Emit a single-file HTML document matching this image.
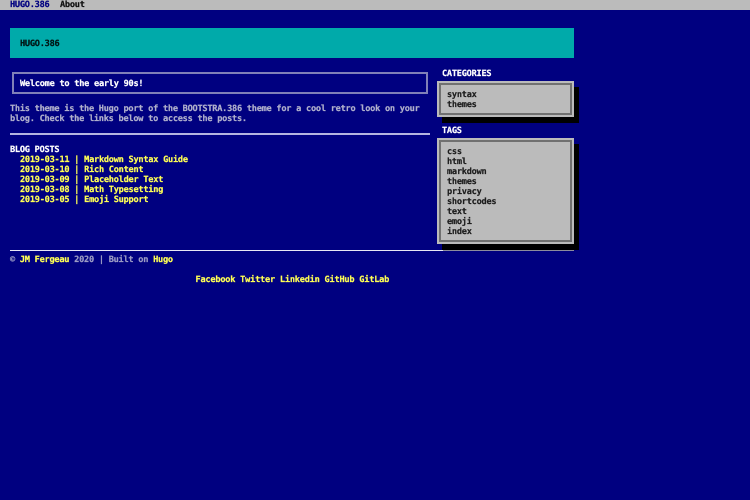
<!DOCTYPE html>
<html>
<head>
<meta charset="utf-8">
<style>
html,body{margin:0;padding:0;background:#000080;width:750px;height:500px;overflow:hidden}
body{position:relative;font-family:"DejaVu Sans Mono","Liberation Mono",monospace;font-size:8.6px;letter-spacing:-.24px;line-height:10px;font-weight:bold;color:#bbb;-webkit-text-stroke:.2px currentColor;text-rendering:geometricPrecision}
div{position:absolute;box-sizing:border-box}
.t{white-space:pre;height:10px;margin-top:2px}
.y{color:#ffff54}
.w{color:#fff}
.g{color:#b0b0cc}
.f{color:#9c9cc4}
.d{color:#1c1c1c}
.panel{background:#bbb;left:437px;width:137px;box-shadow:5px 6px 0 #000}
.panel:after{content:"";position:absolute;left:2px;top:2px;right:2px;bottom:2px;border:2px solid #707070}
</style>
</head>
<body>
<div style="left:0;top:0;width:750px;height:10px;background:#bbb"></div>
<div class="t" style="left:10px;top:-2px;color:#000080">HUGO.386</div>
<div class="t" style="left:60px;top:-2px;color:#111">About</div>

<div style="left:10px;top:28px;width:564px;height:30px;background:#00aaaa"></div>
<div class="t" style="left:20px;top:37px;color:#001414">HUGO.386</div>

<div style="left:12px;top:72px;width:416px;height:22px;border:2px solid #8080b8"></div>
<div class="t w" style="left:20px;top:77px">Welcome to the early 90s!</div>

<div class="t g" style="left:10px;top:102px">This theme is the Hugo port of the BOOTSTRA.386 theme for a cool retro look on your</div>
<div class="t g" style="left:10px;top:112px">blog. Check the links below to access the posts.</div>

<div style="left:10px;top:133px;width:420px;height:2px;background:#b4b4e0"></div>

<div class="t w" style="left:10px;top:143px">BLOG POSTS</div>
<div class="t y" style="left:20px;top:153px">2019-03-11 | Markdown Syntax Guide</div>
<div class="t y" style="left:20px;top:163px">2019-03-10 | Rich Content</div>
<div class="t y" style="left:20px;top:173px">2019-03-09 | Placeholder Text</div>
<div class="t y" style="left:20px;top:183px">2019-03-08 | Math Typesetting</div>
<div class="t y" style="left:20px;top:193px">2019-03-05 | Emoji Support</div>

<div style="left:10px;top:250px;width:433px;height:1px;background:#e8e8f4"></div>
<div style="left:443px;top:250px;width:131px;height:1px;background:#8c8c9c"></div>

<div class="t w" style="left:442px;top:67px">CATEGORIES</div>
<div class="panel" style="top:81px;height:36px"></div>
<div class="t d" style="left:447px;top:88px">syntax</div>
<div class="t d" style="left:447px;top:98px">themes</div>

<div class="t w" style="left:442px;top:124px">TAGS</div>
<div class="panel" style="top:138px;height:106px"></div>
<div class="t d" style="left:447px;top:145px">css</div>
<div class="t d" style="left:447px;top:155px">html</div>
<div class="t d" style="left:447px;top:165px">markdown</div>
<div class="t d" style="left:447px;top:175px">themes</div>
<div class="t d" style="left:447px;top:185px">privacy</div>
<div class="t d" style="left:447px;top:195px">shortcodes</div>
<div class="t d" style="left:447px;top:205px">text</div>
<div class="t d" style="left:447px;top:215px">emoji</div>
<div class="t d" style="left:447px;top:225px">index</div>

<div class="t f" style="left:10px;top:253px">© <span class="y">JM Fergeau</span> 2020 | Built on <span class="y">Hugo</span></div>
<div class="t y" style="left:195.5px;top:273px;letter-spacing:-.21px">Facebook Twitter Linkedin GitHub GitLab</div>
</body>
</html>
